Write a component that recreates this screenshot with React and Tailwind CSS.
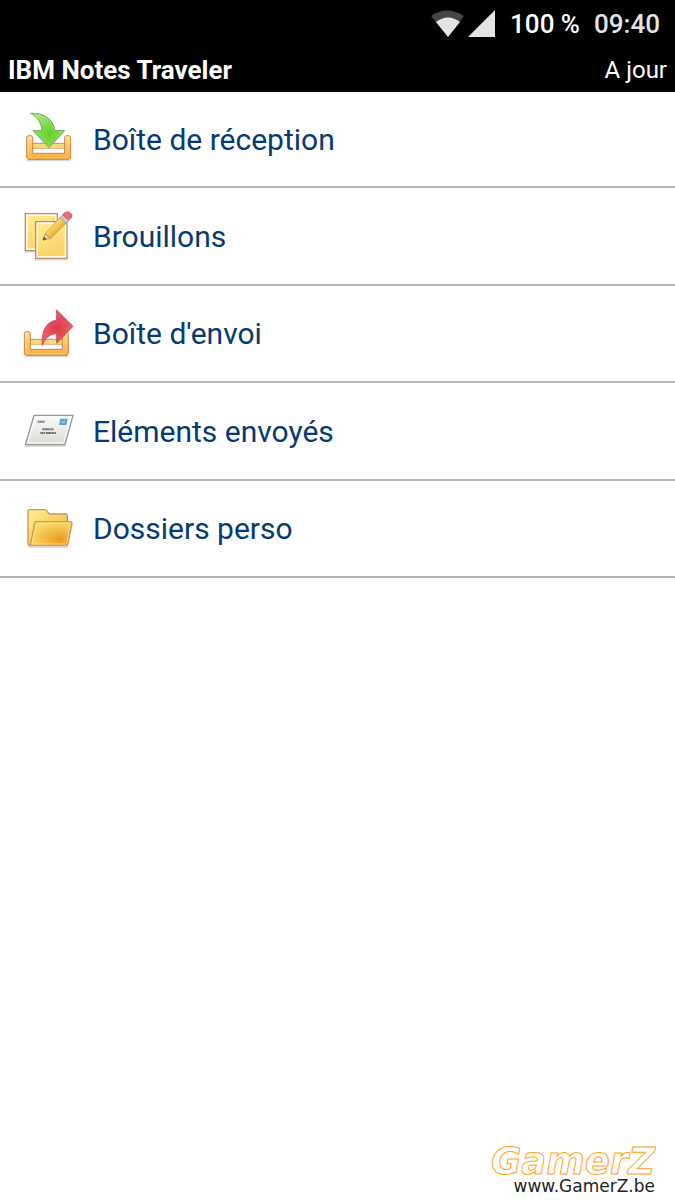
const iconClass = "size-14 shrink-0";

function Tray() {
  return (
    <>
      <path d="M50 184H182" stroke="#000" strokeWidth="5" opacity="0.14" />
      <path d="M66 133H166V149H66Z" fill="#ffd77c" stroke="#c79058" strokeWidth="3" />
      <path d="M70 149H162V163H70Z" fill="#fdfdfd" />
      <path
        d="M50 116Q50 110 56 110H62Q68 110 68 116V163H164V116Q164 110 170 110H176Q182 110 182 116V174Q182 181 175 181H57Q50 181 50 174Z"
        fill="url(#trayFill)"
        stroke="#c98444"
        strokeWidth="3"
      />
      <path d="M55 116V172Q55 176 60 176H172" fill="none" stroke="#ffe0a0" strokeWidth="2" opacity="0.7" />
    </>
  );
}

function TrayGradient() {
  return (
    <linearGradient id="trayFill" x1="0" y1="0" x2="0" y2="1">
      <stop offset="0" stopColor="#ffe08c" />
      <stop offset="1" stopColor="#fbae42" />
    </linearGradient>
  );
}

function InboxIcon() {
  return (
    <svg viewBox="36 36 168 168" className={iconClass} aria-hidden="true">
      <defs>
        <TrayGradient />
        <radialGradient id="greenArrow" cx="0.55" cy="0.6" r="0.6">
          <stop offset="0" stopColor="#63cf25" />
          <stop offset="1" stopColor="#a5e582" />
        </radialGradient>
      </defs>
      <Tray />
      <path
        d="M62 43C98 41 129 57 135 95H164L117 146L69 95H96C94 73 83 54 62 43Z"
        fill="url(#greenArrow)"
        stroke="#6cae54"
        strokeWidth="3"
        strokeLinejoin="round"
      />
    </svg>
  );
}

function DraftsIcon() {
  return (
    <svg viewBox="36 36 168 168" className={iconClass} aria-hidden="true">
      <defs>
        <linearGradient id="note" x1="0" y1="0" x2="0.4" y2="1">
          <stop offset="0" stopColor="#ffeb98" />
          <stop offset="1" stopColor="#f9d468" />
        </linearGradient>
        <linearGradient id="pencil" x1="0" y1="0" x2="1" y2="1">
          <stop offset="0.3" stopColor="#ffe67a" />
          <stop offset="0.7" stopColor="#e5a42c" />
        </linearGradient>
      </defs>
      <path d="M43 167h62M74 191h99" stroke="#000" strokeWidth="5" opacity="0.14" />
      <path d="M46 53h96v111H46z" fill="#fffdf2" stroke="#c48b62" strokeWidth="4" />
      <path d="M53 60h82v97H53z" fill="url(#note)" />
      <path d="M77 77h94v110H77z" fill="#fffdf2" stroke="#c48b62" strokeWidth="4" />
      <path d="M84 84h80v96H84z" fill="url(#note)" />
      <path d="M105 114L151 63L170 80L122 127Z" fill="url(#pencil)" stroke="#c08a40" strokeWidth="2" />
      <path d="M105 114L122 127L99 132Z" fill="#f3cf9a" stroke="#b98850" strokeWidth="2" />
      <path d="M102 123L109 130L99 132Z" fill="#555" stroke="#555" strokeWidth="2" />
      <path d="M149 65L158 56L177 73L168 82Z" fill="#c5c5c5" stroke="#929292" strokeWidth="2" />
      <path d="M158 56L165 49Q172 44 182 51Q190 59 184 66L177 73Z" fill="#e2707a" stroke="#c25b65" strokeWidth="2" />
    </svg>
  );
}

function OutboxIcon() {
  return (
    <svg viewBox="36 36 168 168" className={iconClass} aria-hidden="true">
      <defs>
        <TrayGradient />
        <radialGradient id="redArrow">
          <stop offset="0" stopColor="#d93b4a" />
          <stop offset="1" stopColor="#e8606b" />
        </radialGradient>
      </defs>
      <g transform="translate(-7 3)">
        <Tray />
      </g>
      <path
        d="M140 48L189 97L140 148V119C117 120 106 132 97 154C93 116 107 82 140 79Z"
        fill="url(#redArrow)"
        stroke="#cf5560"
        strokeWidth="3"
        strokeLinejoin="round"
      />
    </svg>
  );
}

function SentIcon() {
  return (
    <svg viewBox="36 36 168 168" className={iconClass} aria-hidden="true">
      <defs>
        <linearGradient id="envelope" x1="0" y1="0" x2="0" y2="1">
          <stop offset="0" stopColor="#fafafa" />
          <stop offset="1" stopColor="#dcdbd6" />
        </linearGradient>
      </defs>
      <path d="M46 165H168" stroke="#000" strokeWidth="5" opacity="0.18" />
      <path d="M72 73H189L165 161H46Z" fill="url(#envelope)" stroke="#989898" strokeWidth="4" strokeLinejoin="round" />
      <path d="M76 78H183L161 156H53Z" fill="none" stroke="#fff" strokeWidth="3" />
      <path d="M151 83H173L169 102H147Z" fill="#5b9edb" />
      <path d="M155 91H166M154 95H164" stroke="#bcd9f2" strokeWidth="2" />
      <path d="M83 92H104" stroke="#777" strokeWidth="6" strokeDasharray="6 1 4 1" />
      <path d="M97 115H131" stroke="#777" strokeWidth="6" strokeDasharray="7 1 14 2 5 1" />
      <path d="M91 126H138" stroke="#777" strokeWidth="6" strokeDasharray="9 1 5 2 15 1" />
    </svg>
  );
}

function FolderIcon() {
  return (
    <svg viewBox="36 36 168 168" className={iconClass} aria-hidden="true">
      <defs>
        <linearGradient id="folderBack" x1="0" y1="0" x2="1" y2="1">
          <stop offset="0" stopColor="#ffef91" />
          <stop offset="1" stopColor="#eeb83f" />
        </linearGradient>
        <radialGradient id="folderFront" cx="0.72" cy="0.75" r="0.75">
          <stop offset="0" stopColor="#ec9c22" />
          <stop offset="1" stopColor="#fbd969" />
        </radialGradient>
      </defs>
      <path d="M55 174H174" stroke="#000" strokeWidth="5" opacity="0.18" />
      <path
        d="M54 67Q54 62 59 62H104Q108 62 110 65L118 75H167Q172 75 172 80V169H59Q54 169 54 164Z"
        fill="url(#folderBack)"
        stroke="#cd9560"
        strokeWidth="4"
      />
      <path
        d="M80 98H182Q187 98 186 103L174 164Q173 169 168 169H64Q59 169 62 162L74 103Q75 98 80 98Z"
        fill="url(#folderFront)"
        stroke="#cd9560"
        strokeWidth="4"
      />
      <path d="M80 102H181L170 165H66Z" fill="none" stroke="#ffe48b" strokeWidth="2" />
    </svg>
  );
}

const folders = [
  { label: "Boîte de réception", Icon: InboxIcon },
  { label: "Brouillons", Icon: DraftsIcon },
  { label: "Boîte d'envoi", Icon: OutboxIcon },
  { label: "Eléments envoyés", Icon: SentIcon },
  { label: "Dossiers perso", Icon: FolderIcon },
];

function StatusBar() {
  return (
    <div className="flex h-12 items-center justify-end pr-[15px] text-[26px] font-medium text-[#e4e4e4]">
      <svg viewBox="0 0 64 28" className="mr-[15px] h-7 w-16" aria-hidden="true">
        <path d="M0 6Q16-5 33 6L17 27Z" fill="#454545" />
        <path d="M5 12Q17 3 29 12L17 27Z" fill="#e4e4e4" />
        <path d="M37 27L64 0V27Z" fill="#e4e4e4" />
      </svg>
      <span className="mr-3.5 text-white">100 %</span>
      <span>09:40</span>
    </div>
  );
}

export default function App() {
  return (
    <div className="flex min-h-screen flex-col bg-white font-['Roboto',sans-serif]">
      <header className="bg-black text-white">
        <StatusBar />
        <div className="flex h-11 items-center justify-between px-2">
          <h1 className="text-[26px] font-bold">IBM Notes Traveler</h1>
          <span className="text-[24px]">A jour</span>
        </div>
      </header>

      <nav>
        <ul>
          {folders.map(({ label, Icon }) => (
            <li key={label} className="h-[97px] border-b-2 border-[#b5b5b5] first:h-24 even:h-[98px]">
              <button type="button" className="flex h-full w-full items-center gap-[15px] pl-[22px] text-left text-[30px] text-[#063a73]">
                <Icon />
                {label}
              </button>
            </li>
          ))}
        </ul>
      </nav>

      <footer className="mt-auto flex flex-col items-end pr-5 pb-1.5 font-['DejaVu_Sans',sans-serif]">
        <span className="text-[37px] leading-8 font-bold text-white italic [-webkit-text-stroke:1px_#ffa31a]">GamerZ</span>
        <a href="#" className="text-[17px] leading-4 text-[#222]">www.GamerZ.be</a>
      </footer>
    </div>
  );
}
